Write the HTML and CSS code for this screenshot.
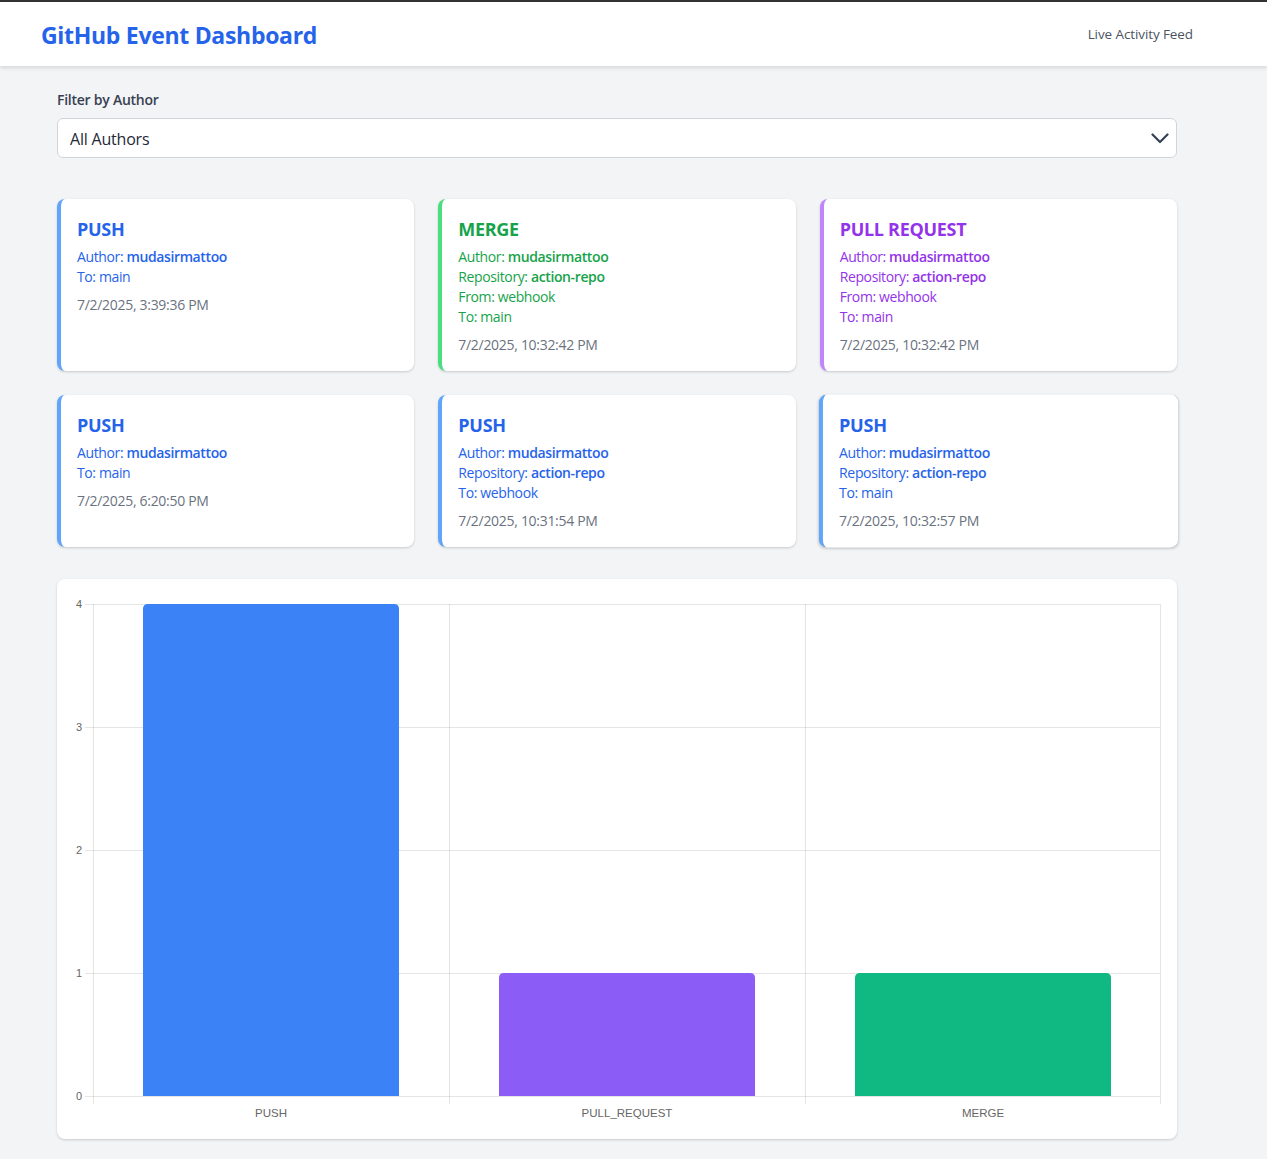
FILE: index.html
```html
<!DOCTYPE html>
<html lang="en">
<head>
<meta charset="utf-8">
<title>GitHub Event Dashboard</title>
<link rel="stylesheet" href="styles.css">
</head>
<body>
<header class="topbar">
  <div class="topbar-inner">
    <h1 class="brand">GitHub Event Dashboard</h1>
    <span class="tagline">Live Activity Feed</span>
  </div>
</header>
<main class="container">
  <section class="filter">
    <label class="filter-label" for="author">Filter by Author</label>
    <div class="select">
      <span class="select-value">All Authors</span>
      <svg class="chevron" width="18" height="11" viewBox="0 0 18 11"><path d="M1.5 1.5 L9 9 L16.5 1.5" fill="none" stroke="#374151" stroke-width="2.2" stroke-linecap="round" stroke-linejoin="round"/></svg>
    </div>
  </section>

  <section class="cards">
    <article class="card card-push">
      <h2 class="card-title">PUSH</h2>
      <p class="line">Author: <b>mudasirmattoo</b></p>
      <p class="line">To: main</p>
      <p class="time">7/2/2025, 3:39:36 PM</p>
    </article>
    <article class="card card-merge">
      <h2 class="card-title">MERGE</h2>
      <p class="line">Author: <b>mudasirmattoo</b></p>
      <p class="line">Repository: <b>action-repo</b></p>
      <p class="line">From: webhook</p>
      <p class="line">To: main</p>
      <p class="time">7/2/2025, 10:32:42 PM</p>
    </article>
    <article class="card card-pr">
      <h2 class="card-title">PULL REQUEST</h2>
      <p class="line">Author: <b>mudasirmattoo</b></p>
      <p class="line">Repository: <b>action-repo</b></p>
      <p class="line">From: webhook</p>
      <p class="line">To: main</p>
      <p class="time">7/2/2025, 10:32:42 PM</p>
    </article>
    <article class="card card-push">
      <h2 class="card-title">PUSH</h2>
      <p class="line">Author: <b>mudasirmattoo</b></p>
      <p class="line">To: main</p>
      <p class="time">7/2/2025, 6:20:50 PM</p>
    </article>
    <article class="card card-push">
      <h2 class="card-title">PUSH</h2>
      <p class="line">Author: <b>mudasirmattoo</b></p>
      <p class="line">Repository: <b>action-repo</b></p>
      <p class="line">To: webhook</p>
      <p class="time">7/2/2025, 10:31:54 PM</p>
    </article>
    <article class="card card-push card-hover">
      <h2 class="card-title">PUSH</h2>
      <p class="line">Author: <b>mudasirmattoo</b></p>
      <p class="line">Repository: <b>action-repo</b></p>
      <p class="line">To: main</p>
      <p class="time">7/2/2025, 10:32:57 PM</p>
    </article>
  </section>

  <section class="chart-card">
    <svg class="chart" width="1088" height="528" viewBox="0 0 1088 528">
      <g stroke="rgba(0,0,0,0.1)" stroke-width="1" shape-rendering="crispEdges">
        <line x1="12" y1="9.5" x2="1087" y2="9.5"/>
        <line x1="12" y1="132.5" x2="1087" y2="132.5"/>
        <line x1="12" y1="255.5" x2="1087" y2="255.5"/>
        <line x1="12" y1="378.5" x2="1087" y2="378.5"/>
        <line x1="12" y1="501.5" x2="1087" y2="501.5"/>
        <line x1="20.5" y1="9" x2="20.5" y2="509"/>
        <line x1="376.5" y1="9" x2="376.5" y2="509"/>
        <line x1="732.5" y1="9" x2="732.5" y2="509"/>
        <line x1="1087.5" y1="9" x2="1087.5" y2="509"/>
      </g>
      <path d="M70 501 V14 Q70 9 75 9 H321 Q326 9 326 14 V501 Z" fill="#3b82f6"/>
      <path d="M426 501 V383 Q426 378 431 378 H677 Q682 378 682 383 V501 Z" fill="#8b5cf6"/>
      <path d="M782 501 V383 Q782 378 787 378 H1033 Q1038 378 1038 383 V501 Z" fill="#10b981"/>
      <g class="axis-text" text-anchor="end">
        <text x="9" y="13">4</text>
        <text x="9" y="136">3</text>
        <text x="9" y="259">2</text>
        <text x="9" y="382">1</text>
        <text x="9" y="505">0</text>
      </g>
      <g class="axis-text axis-x" text-anchor="middle">
        <text x="198" y="522">PUSH</text>
        <text x="554" y="522">PULL_REQUEST</text>
        <text x="910" y="522">MERGE</text>
      </g>
    </svg>
  </section>
</main>
</body>
</html>
```
FILE: styles.css
```css
* { box-sizing: border-box; }
html, body { margin: 0; padding: 0; }
body {
  background: #f3f4f6;
  font-family: "Open Sans", "Noto Sans", sans-serif;
  color: #111827;
  border-top: 2px solid #333;
}
.topbar {
  background: #fff;
  box-shadow: 0 2px 4px rgba(0,0,0,0.12);
}
.topbar-inner {
  width: 1152px;
  margin-left: 41px;
  padding: 0 16px;
  height: 64px;
  display: flex;
  align-items: center;
  justify-content: space-between;
}
.brand {
  margin: 2px 0 0 -16px;
  font-size: 23px;
  line-height: 32px;
  font-weight: 700;
  letter-spacing: -0.3px;
  color: #2563eb;
}
.tagline {
  font-size: 13.5px;
  letter-spacing: -0.1px;
  color: #4b5563;
  margin-right: -16px;
  margin-top: 0;
}
.container {
  width: 1120px;
  margin-left: 57px;
  padding: 24px 0 20px;
}
.filter { margin-bottom: 41px; }
.filter-label {
  display: block;
  font-size: 14px;
  line-height: 20px;
  font-weight: 600;
  letter-spacing: -0.25px;
  color: #374151;
  margin-bottom: 8px;
}
.select {
  height: 40px;
  background: #fff;
  border: 1px solid #d1d5db;
  border-radius: 6px;
  display: flex;
  align-items: center;
  justify-content: space-between;
  padding: 1px 7px 0 12px;
}
.select-value { font-size: 16px; color: #1f2937; letter-spacing: -0.2px; }
.chevron { display: block; }
.cards {
  display: grid;
  grid-template-columns: repeat(3, 1fr);
  gap: 24px 24px;
  margin-bottom: 32px;
}
.card {
  background: #fff;
  border-radius: 8px;
  border-left: 4px solid #60a5fa;
  box-shadow: 0 1px 3px rgba(0,0,0,0.12), 0 1px 2px rgba(0,0,0,0.06);
  padding: 16px;
}
.card-hover { transform: scale(1.006); }
.card-title {
  margin: 0 0 4px;
  font-size: 18px;
  line-height: 28px;
  font-weight: 700;
  letter-spacing: -0.3px;
}
.line {
  margin: 0;
  font-size: 14px;
  line-height: 20px;
  letter-spacing: -0.38px;
}
.line b { font-weight: 600; }
.time {
  margin: 8px 0 0;
  font-size: 14px;
  line-height: 20px;
  letter-spacing: -0.3px;
  color: #6b7280;
}
.card-push { border-left-color: #60a5fa; }
.card-push .card-title, .card-push .line { color: #2563eb; }
.card-merge { border-left-color: #4ade80; }
.card-merge .card-title, .card-merge .line { color: #16a34a; }
.card-pr { border-left-color: #c084fc; }
.card-pr .card-title, .card-pr .line { color: #9333ea; }
.chart-card {
  background: #fff;
  border-radius: 8px;
  box-shadow: 0 1px 3px rgba(0,0,0,0.12), 0 1px 2px rgba(0,0,0,0.06);
  padding: 16px;
  height: 560px;
}
.chart { display: block; }
.axis-text {
  font-family: "Liberation Sans", Arial, sans-serif;
  font-size: 11px;
  fill: #666;
}
.axis-x { font-size: 11.5px; }
```
